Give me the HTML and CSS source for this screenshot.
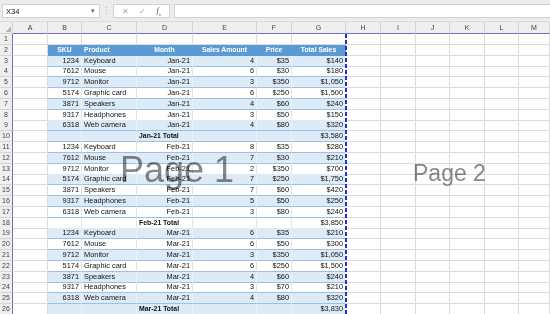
FILE: index.html
```html
<!DOCTYPE html>
<html lang="en">
<head>
<meta charset="UTF-8">
<meta name="viewport" content="width=device-width, initial-scale=1">
<title>Sales - Page Break Preview</title>
<link rel="stylesheet" href="styles.css">
</head>
<body>

<!-- Name box + formula bar -->
<div class="topbar">
  <div class="namebox"><span>X34</span><span class="caret">&#9662;</span></div>
  <span class="grip">&#8942;</span>
  <div class="fxbtns"><span class="btn">&#10005;</span><span class="btn">&#10003;</span><span class="fx">f<sub>x</sub></span></div>
  <div class="formula"></div>
</div>

<!-- Sheet -->
<div class="sheet">
  <div id="grid"></div>
  <div class="pagebreak"></div>
  <div class="watermark p1">Page 1</div>
  <div class="watermark p2">Page 2</div>
</div>

<script>
const letters=['A','B','C','D','E','F','G','H','I','J','K','L','M'];
const products=['Keyboard','Mouse','Monitor','Graphic card','Speakers','Headphones','Web camera'];
const skus=['1234','7612','9712','5174','3871','9317','6318'];
const months={
  'Jan-21':{qty:[4,6,3,6,4,3,4],price:[35,30,350,250,60,50,80],total:'$3,580'},
  'Feb-21':{qty:[8,7,2,7,7,5,3],price:[35,30,350,250,60,50,80],total:'$3,850'},
  'Mar-21':{qty:[6,6,3,6,4,3,4],price:[35,50,350,250,60,70,80],total:'$3,830'}
};
// rows with the light blue fill
const band=[3,5,7,9,10,12,14,16,19,21,23,25,26];

function money(v){return '$'+v.toLocaleString('en-US');}

// build B..G values for every sheet row
const rows={2:{type:'th',v:['SKU','Product','Month','Sales Amount','Price','Total Sales']}};
let r=3;
for(const m in months){
  const d=months[m];
  for(let i=0;i<7;i++){
    rows[r++]={type:'data',v:[skus[i],products[i],m,d.qty[i],money(d.price[i]),money(d.qty[i]*d.price[i])]};
  }
  rows[r++]={type:'total',v:['','',m+' Total','','',d.total]};
}

const alignData=['r','l','r','r','r','r'];
const alignHead=['c','l','c','c','c','c'];
const alignTotal=['r','l','l b','r','r','r'];

let html='<div class="row head"><div class="corner"></div>'+letters.map(l=>`<div class="col">${l}</div>`).join('')+'</div>';
for(let n=1;n<=26;n++){
  const row=rows[n];
  html+=`<div class="row"><div class="num">${n}</div>`;
  for(let c=0;c<13;c++){
    let cls='cell',v='';
    if(row&&c>=1&&c<=6){
      const k=c-1;
      v=row.v[k];
      if(row.type==='th') cls+=' th '+alignHead[k];
      else{
        cls+=' t '+(band.includes(n)?'band ':'')+(row.type==='total'?alignTotal[k]:alignData[k]);
      }
    }
    html+=`<div class="${cls}">${v}</div>`;
  }
  html+='</div>';
}
document.getElementById('grid').innerHTML=html;
</script>

</body>
</html>
```
FILE: styles.css
```css
:root{
  --grid:#dcdcdc;--hdr:#efefef;--hdrline:#d4d4d4;--page:#7070c6;
  --blue:#5b9bd5;--band:#ddebf7;--bandline:#9bc2e6;--text:#111;
}
body{margin:0;font-family:"Liberation Sans",Arial,sans-serif;background:#fff;color:var(--text);overflow:hidden;}

/* formula bar */
.topbar{height:22px;background:#ececec;display:flex;align-items:flex-start;padding-top:4px;box-sizing:border-box;border-bottom:1px solid #dcdcdc;}
.namebox,.fxbtns,.formula{height:14px;background:#fff;border:1px solid #d2d2d2;box-sizing:border-box;}
.namebox{margin-left:2px;width:98px;display:flex;justify-content:space-between;align-items:center;padding:0 4px 0 3px;font-size:7.5px;}
.caret{font-size:7px;color:#666;}
.grip{width:13px;text-align:center;font-size:9px;line-height:14px;color:#b8b8b8;}
.fxbtns{width:57px;display:flex;align-items:center;justify-content:space-around;padding:0 3px;}
.btn{font-size:8px;color:#a8a8a8;}
.fx{font-size:8px;font-style:italic;font-family:"Liberation Serif",serif;color:#555;}
.fx sub{font-size:5px;}
.formula{margin-left:4px;flex:1;border-right:none;}

/* sheet grid */
.sheet{position:relative;}
.row{display:grid;grid-template-columns:13px 35px 34px 55px 56px 64px 35px 54px 35px 35px 34px 35px 34px 1fr;height:10.8px;}
.row.head{height:12px;}
.row>div{box-sizing:border-box;white-space:nowrap;overflow:visible;}
.corner{background:var(--hdr);border-right:1px solid var(--hdrline);border-bottom:1px solid var(--hdrline);
  background-image:linear-gradient(135deg,transparent 60%,#b4b4b4 60%);background-size:7px 7px;background-repeat:no-repeat;background-position:right 1px bottom 1px;}
.col{background:var(--hdr);border-right:1px solid var(--hdrline);border-bottom:1px solid var(--page);text-align:center;font-size:7px;line-height:11px;color:#444;}
.num{background:var(--hdr);border-right:1px solid var(--page);border-bottom:1px solid var(--hdrline);text-align:center;font-size:7px;line-height:10px;color:#444;}
.cell{border-right:1px solid var(--grid);border-bottom:1px solid var(--grid);font-size:7.4px;line-height:10px;padding:0 2px;}

/* table */
.t{border-bottom-color:var(--bandline);border-right-color:#e4e4e4;}
.band{background:var(--band);border-right-color:#eaf2fa;}
.th{background:var(--blue);border-color:var(--blue);color:#fff;font-weight:bold;font-size:6.8px;}
.r{text-align:right;}
.l{text-align:left;}
.c{text-align:center;}
.b{font-weight:bold;font-size:6.9px;}

/* page break preview */
.pagebreak{position:absolute;left:345px;top:12px;bottom:0;width:2px;background:repeating-linear-gradient(#2b2bd6 0 4px,transparent 4px 6px);}
.watermark{position:absolute;color:#888;line-height:1;mix-blend-mode:multiply;white-space:nowrap;}
.p1{left:120px;top:130px;font-size:36px;}
.p2{left:413px;top:140px;font-size:23px;}
```
